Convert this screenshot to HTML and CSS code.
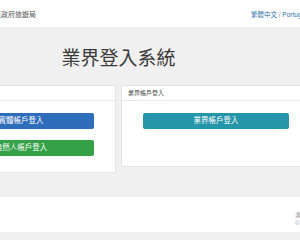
FILE: index.html
```html
<!DOCTYPE html>
<html>

<head>
    <meta charset="utf-8">
    <title>業界登入系統</title>
    <meta name="viewport" content="width=device-width, initial-scale=1">
    <link rel="stylesheet" href="styles.css">
</head>

<body>
    <header class="topbar">
        <div class="topbar-inner">
            <span class="brand">澳門特別行政區政府旅遊局</span>
            <span class="lang"><a href="#">繁體中文</a> / <a href="#">Português</a></span>
        </div>
    </header>

    <main class="content">
        <h1 class="title">業界登入系統</h1>
        <div class="cols">
            <section class="card">
                <div class="card-head">個人帳戶登入</div>
                <div class="card-body">
                    <a class="btn btn-blue" href="#">實體帳戶登入</a>
                    <a class="btn btn-green" href="#">自然人帳戶登入</a>
                </div>
            </section>
            <section class="card card-short">
                <div class="card-head">業界帳戶登入</div>
                <div class="card-body">
                    <a class="btn btn-teal" href="#">業界帳戶登入</a>
                </div>
            </section>
        </div>
    </main>

    <footer class="footer">
        <div class="footer-inner">
            <span>澳門特別行政區政府旅遊局 版權所有</span>
            <span>© 2024 MGTO</span>
        </div>
    </footer>
</body>

</html>
```

FILE: styles.css
```css
body {
    margin: 0;
    padding: 0;
    overflow: hidden;
    background-color: #f0f0f0;
    font-family: "Liberation Sans", "Noto Sans CJK TC", sans-serif;
    color: #333;
}

a {
    text-decoration: none;
}

.topbar {
    height: 27px;
    background-color: #fff;
}

.topbar-inner {
    display: flex;
    align-items: center;
    justify-content: space-between;
    height: 27px;
    width: 360px;
    margin-left: -48px;
    white-space: nowrap;
}

.brand {
    font-size: 7px;
    color: #555;
}

.lang {
    font-size: 6.5px;
    color: #888;
}

.lang a {
    color: #2f6fae;
}

.content {
    width: 385px;
    margin-left: -74px;
    padding-bottom: 23px;
}

.title {
    margin: 20px 0 19px;
    font-size: 19px;
    line-height: 19px;
    font-weight: normal;
    text-align: center;
    color: #3a3a3a;
    font-family: "Noto Sans CJK TC", sans-serif;
}

.cols {
    display: flex;
    align-items: flex-start;
    gap: 5px;
}

.card {
    flex: 1;
    background-color: #fff;
    border: 1px solid #e4e4e4;
    border-radius: 2px;
}

.card-head {
    height: 14px;
    line-height: 14px;
    padding: 0 6px;
    font-size: 6px;
    color: #444;
    border-bottom: 1px solid #e8e8e8;
}

.card-body {
    display: flex;
    flex-direction: column;
    gap: 11px;
    padding: 12px 21px 16px;
}

.card-short .card-body {
    padding-bottom: 37px;
}

.btn {
    display: block;
    height: 16px;
    line-height: 16px;
    border-radius: 2px;
    text-align: center;
    font-size: 7.5px;
    color: #fff;
}

.btn-blue {
    background-color: #2e6dba;
}

.btn-green {
    background-color: #34a146;
}

.btn-teal {
    background-color: #2595a9;
}

.footer {
    height: 35px;
    margin-top: 1px;
    background-color: #fff;
}

.footer-inner {
    display: flex;
    flex-direction: column;
    justify-content: center;
    height: 35px;
    padding-left: 295px;
    padding-top: 9px;
    box-sizing: border-box;
    font-size: 6px;
    line-height: 8px;
    color: #999;
    white-space: nowrap;
}
```
